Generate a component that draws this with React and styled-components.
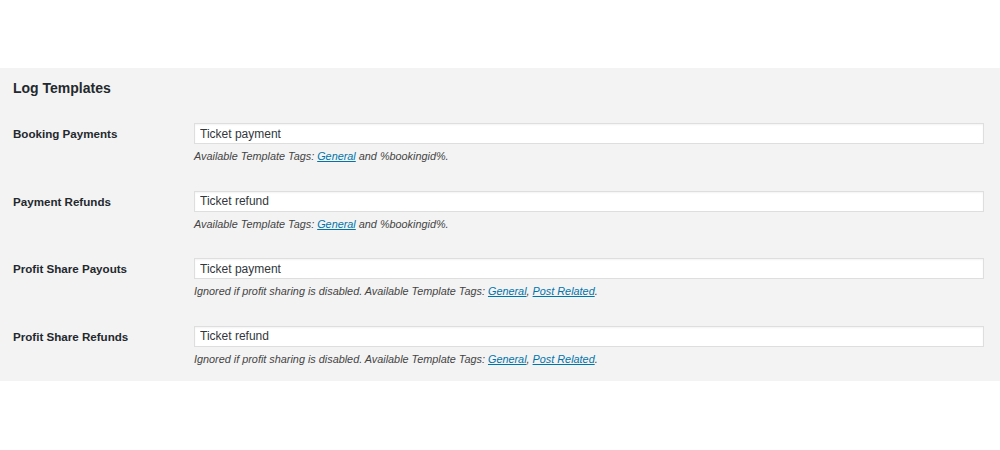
import React from 'react';
import styled, { createGlobalStyle } from 'styled-components';

const GlobalStyle = createGlobalStyle`
  body {
    margin: 0;
    background: #fff;
    font-family: "Liberation Sans", Arial, sans-serif;
  }
`;

const Panel = styled.div`
  margin-top: 68px;
  height: 313px;
  box-sizing: border-box;
  background: #f3f3f3;
  padding: 10px 16px 16px 13px;
`;

const Heading = styled.h2`
  margin: 0 0 25px;
  font-size: 14px;
  line-height: 20px;
  font-weight: bold;
  color: #23282d;
`;

const Rows = styled.div`
  display: flex;
  flex-direction: column;
  gap: 27.5px;
`;

const Row = styled.div`
  display: grid;
  grid-template-columns: 181px 1fr;
`;

const Label = styled.label`
  font-size: 11.6px;
  font-weight: bold;
  line-height: 21px;
  color: #23282d;
`;

const Field = styled.div`
  display: flex;
  flex-direction: column;
`;

const Input = styled.input`
  box-sizing: border-box;
  height: 21px;
  width: 100%;
  margin: 0;
  padding: 0 5px;
  border: 1px solid #dedede;
  box-shadow: inset 0 1px 2px rgba(0, 0, 0, 0.05);
  background: #fff;
  font-family: "Liberation Sans", Arial, sans-serif;
  font-size: 12px;
  color: #32373c;
  outline: none;
`;

const Desc = styled.p`
  margin: 5px 0 0;
  font-size: 10.85px;
  line-height: 14px;
  font-style: italic;
  color: #444;
`;

const TagLink = styled.a`
  color: #0073aa;
  text-decoration: underline;
`;

const rows = [
  { label: 'Booking Payments', value: 'Ticket payment', profit: false },
  { label: 'Payment Refunds', value: 'Ticket refund', profit: false },
  { label: 'Profit Share Payouts', value: 'Ticket payment', profit: true },
  { label: 'Profit Share Refunds', value: 'Ticket refund', profit: true }
];

export default function App() {
  return (
    <>
      <GlobalStyle />
      <Panel>
        <Heading>Log Templates</Heading>
        <Rows>
          {rows.map(r => (
            <Row key={r.label}>
              <Label>{r.label}</Label>
              <Field>
                <Input type="text" defaultValue={r.value} />
                {r.profit ? (
                  <Desc>
                    Ignored if profit sharing is disabled. Available Template Tags:{' '}
                    <TagLink href="#">General</TagLink>, <TagLink href="#">Post Related</TagLink>.
                  </Desc>
                ) : (
                  <Desc>
                    Available Template Tags: <TagLink href="#">General</TagLink> and %bookingid%.
                  </Desc>
                )}
              </Field>
            </Row>
          ))}
        </Rows>
      </Panel>
    </>
  );
}
